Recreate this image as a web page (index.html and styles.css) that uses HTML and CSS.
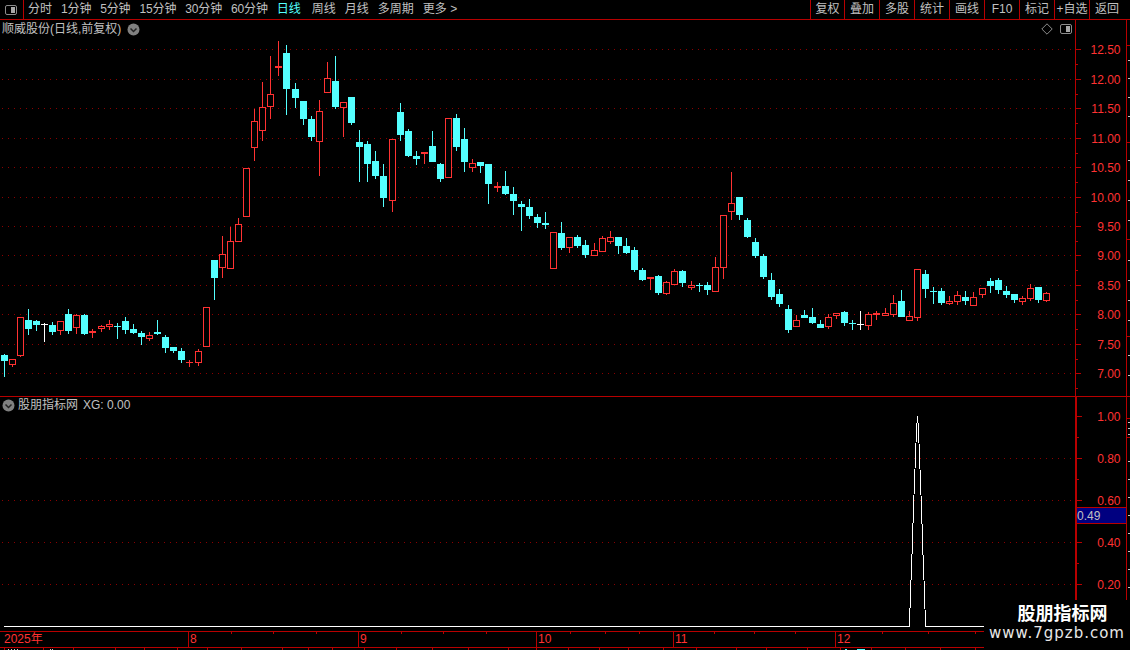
FILE: index.html
```html
<!DOCTYPE html>
<html lang="zh-CN">
<head>
<meta charset="utf-8">
<title>顺威股份</title>
<link rel="stylesheet" href="styles.css">
</head>
<body>
<div class="app">
  <header class="toolbar">
    <div class="tool-icon">
      <svg class="panel-icon" width="12" height="10" viewBox="0 0 12 10"><rect x="0.5" y="0.5" width="11" height="9" rx="1.5" class="panel-frame"/><rect x="6" y="2" width="4" height="6" class="panel-fill"/></svg>
    </div>
    <nav class="periods">
      <span>分时</span><span class="num">1分钟</span><span class="num">5分钟</span><span class="num">15分钟</span><span class="num">30分钟</span><span class="num">60分钟</span><span class="active">日线</span><span>周线</span><span>月线</span><span>多周期</span><span>更多 &gt;</span>
    </nav>
    <div class="actions">
      <span>复权</span><span>叠加</span><span>多股</span><span>统计</span><span>画线</span><span>F10</span><span>标记</span><span>+自选</span><span class="last">返回</span>
    </div>
  </header>

  <section class="pane pane-main">
    <div class="plot">
      <svg id="kline" class="chart" width="1075" height="376" viewBox="0 20 1075 376"></svg>
      <div class="pane-title title-main">
        <span>顺威股份(日线,前复权)</span>
        <svg class="fold" width="13" height="13" viewBox="0 0 13 13"><circle cx="6.5" cy="6.5" r="6" class="fold-disc"/><path d="M3.5 5.5 6.5 8.5 9.5 5.5" class="fold-mark"/></svg>
      </div>
      <div class="pane-tools">
        <svg width="12" height="12" viewBox="0 0 12 12"><path d="M6 0.8 11.2 6 6 11.2 0.8 6Z" class="panel-frame"/></svg>
        <svg width="12" height="10" viewBox="0 0 12 10"><rect x="0.5" y="0.5" width="11" height="9" rx="1.5" class="panel-frame"/><rect x="6" y="2" width="4" height="6" class="panel-fill"/></svg>
      </div>
    </div>
    <svg id="axis-main" class="axis" width="50" height="376" viewBox="1076 20 50 376"></svg>
    <svg id="strip-main" class="strip" width="3" height="376" viewBox="1127 20 3 376"></svg>
  </section>

  <section class="pane pane-sub">
    <div class="plot">
      <svg id="spike" class="chart" width="1075" height="233" viewBox="0 397 1075 233"></svg>
      <div class="pane-title title-sub">
        <svg class="fold" width="13" height="13" viewBox="0 0 13 13"><circle cx="6.5" cy="6.5" r="6" class="fold-disc"/><path d="M3.5 5.5 6.5 8.5 9.5 5.5" class="fold-mark"/></svg>
        <span>股朋指标网</span><span class="xg">XG: 0.00</span>
      </div>
    </div>
    <svg id="axis-sub" class="axis axis-thick" width="49" height="233" viewBox="1077 397 49 233"></svg>
    <svg id="strip-sub" class="strip" width="3" height="233" viewBox="1127 397 3 233"></svg>
  </section>

  <section class="dates">
    <svg id="dates" class="chart" width="1130" height="15" viewBox="0 631 1130 15"></svg>
  </section>
  <svg id="foot" class="foot" width="1130" height="3" viewBox="0 647 1130 3"></svg>

  <aside class="watermark">
    <div class="wm-title">股朋指标网</div>
    <div class="wm-url">www.7gpzb.com</div>
  </aside>
</div>
<script src="chart.js"></script>
</body>
</html>
```

FILE: styles.css
```css
* { box-sizing: border-box; }
html, body { margin: 0; padding: 0; background: #000; }
body { font-family: "Liberation Sans", "Noto Sans CJK SC", sans-serif; font-size: 12px; color: #c0c0c0; }

.app { position: relative; width: 1130px; height: 650px; overflow: hidden; background: #000; display: flex; flex-direction: column; }

.toolbar { display: flex; align-items: stretch; height: 20px; border-bottom: 1px solid #b80000; line-height: 19px; flex: none; }
.tool-icon { width: 24px; border-right: 1px solid #b80000; display: flex; align-items: center; padding-left: 5px; }
.periods { display: flex; gap: 9px; padding-left: 4px; white-space: nowrap; }
.periods .num { letter-spacing: -0.15px; }
.periods .active { color: #54ffff; margin-right: 2px; }
.actions { margin-left: auto; display: flex; }
.actions span { width: 35px; border-left: 1px solid #b80000; text-align: center; white-space: nowrap; }
.actions span:first-child { width: 34px; }
.actions .last { width: 41px; padding-right: 6px; }

.panel-frame { fill: none; stroke: #8c8c8c; stroke-width: 1; }
.panel-fill { fill: #a8a8a8; }
.fold-disc { fill: #808080; }
.fold-mark { fill: none; stroke: #222; stroke-width: 1.5; }

.pane { display: flex; flex: none; border-bottom: 1px solid #b80000; }
.pane-main { height: 377px; }
.pane-sub { height: 234px; border-bottom: 0; }
.plot { position: relative; width: 1075px; flex: none; }
.chart { display: block; }
.axis { display: block; flex: none; box-sizing: content-box; border-right: 1px solid #b80000; box-shadow: -1px 0 0 #b80000; margin-left: 1px; }
.axis-thick { margin-left: 2px; box-shadow: -2px 0 0 #b80000; }
.strip { display: block; flex: none; }

.pane-title { position: absolute; display: flex; align-items: center; white-space: nowrap; line-height: 14px; }
.title-main { left: 2px; top: 2px; gap: 6px; }
.title-sub { left: 2px; top: 1px; gap: 3px; }
.title-sub .xg { margin-left: 2px; }
.fold { display: block; flex: none; }
.pane-tools { position: absolute; right: 3px; top: 3px; display: flex; align-items: center; gap: 7px; }

.dates { height: 17px; flex: none; border-top: 1px solid #b80000; border-bottom: 1px solid #b80000; }
.foot { display: block; flex: none; }

.grid { stroke: #8c0000; stroke-width: 1; stroke-dasharray: 1 5; }
.tick { fill: #b80000; }
.label { fill: #ff3232; font-size: 12px; font-family: "Liberation Sans", "Noto Sans CJK SC", sans-serif; }
.label-value { fill: #c0c0c0; }
.value-box { fill: #000080; stroke: #b80000; stroke-width: 1; }
.mark { fill: #c8c8c8; }
.up { fill: #000; stroke: #ff3232; stroke-width: 1; }
.up-wick, .up-solid { fill: #ff3232; }
.down { fill: #54ffff; }
.flat { fill: #fff; }
.spike-line { fill: none; stroke: #fff; stroke-width: 1; shape-rendering: crispEdges; }
.baseline { fill: #fff; }
.chart rect, .axis rect, .strip rect, .foot rect { shape-rendering: crispEdges; }

.watermark { position: absolute; right: 0; bottom: 0; width: 146px; height: 50px; background: #000; color: #fff; text-align: center; font-weight: 700; }
.wm-title { font-family: "Noto Sans CJK SC", sans-serif; font-size: 18px; line-height: 24px; padding-left: 11px; }
.wm-url { font-family: "DejaVu Sans", sans-serif; font-weight: 400; font-size: 15px; line-height: 18px; letter-spacing: 1px; color: #e8e8e8; }
```

FILE: chart.js
```js
var NS = "http://www.w3.org/2000/svg";

function add(svg, tag, attrs, text) {
  var el = document.createElementNS(NS, tag);
  for (var k in attrs) el.setAttribute(k, attrs[k]);
  if (text !== undefined) el.textContent = text;
  svg.appendChild(el);
  return el;
}

function box(svg, x, y, w, h, cls) {
  add(svg, "rect", { x: x, y: y, width: w, height: h, "class": cls });
}

/* high, body top, body bottom, low (pixels), kind:
   c falling, r rising hollow, R rising flat, w unchanged */
var candles = [
[354,355,361,377,"c"],[359,359,365,367,"r"],[317,317,356,357,"r"],[309,320,329,335,"c"],[320,321,325,331,"c"],
[323,324,325,342,"w"],[322,325,332,335,"c"],[321,321,331,335,"r"],[309,314,331,334,"c"],[314,315,328,334,"r"],
[314,315,334,335,"c"],[329,331,333,338,"R"],[325,326,329,332,"r"],[320,324,327,330,"r"],[323,326,327,339,"c"],
[317,321,330,334,"c"],[324,329,333,334,"c"],[331,333,337,345,"c"],[332,335,339,341,"r"],[320,332,334,335,"c"],
[335,337,348,353,"c"],[347,347,351,353,"c"],[348,351,360,363,"c"],[360,362,363,367,"R"],[349,351,363,366,"r"],
[307,307,347,347,"r"],[260,260,278,300,"c"],[236,254,268,278,"r"],[227,241,269,269,"r"],[218,224,242,242,"r"],
[168,168,217,217,"r"],[109,121,148,161,"r"],[82,107,131,141,"r"],[56,94,107,119,"r"],[41,66,68,76,"R"],
[45,53,89,115,"c"],[83,89,98,108,"c"],[101,101,119,125,"c"],[116,119,137,141,"c"],[100,111,142,176,"r"],
[62,78,93,93,"r"],[56,81,107,109,"c"],[102,102,108,137,"r"],[97,97,123,125,"c"],[130,142,147,182,"c"],
[141,144,164,182,"c"],[151,161,176,179,"c"],[164,176,198,207,"c"],[139,139,201,212,"r"],[103,112,135,141,"c"],
[129,131,156,157,"c"],[151,156,159,165,"c"],[152,152,154,164,"R"],[131,146,162,162,"c"],[163,164,179,182,"c"],
[118,118,178,178,"r"],[114,118,147,151,"c"],[128,139,162,172,"c"],[159,163,168,172,"r"],[162,162,166,173,"c"],
[164,164,184,204,"c"],[182,186,188,192,"R"],[171,186,194,195,"c"],[187,194,201,215,"c"],[201,204,207,231,"c"],
[199,207,216,219,"c"],[214,217,223,228,"c"],[212,223,225,229,"c"],[232,232,269,269,"r"],[222,233,248,250,"c"],
[237,237,248,253,"r"],[235,237,246,248,"c"],[240,245,255,258,"c"],[243,250,256,256,"r"],[236,238,252,252,"r"],
[231,237,242,244,"r"],[237,237,246,254,"c"],[238,246,253,254,"c"],[247,250,270,272,"c"],[268,270,280,281,"c"],
[277,277,279,290,"r"],[275,276,293,295,"c"],[281,282,294,295,"r"],[269,271,285,285,"r"],[270,271,283,287,"c"],
[281,285,288,290,"r"],[283,285,286,292,"c"],[282,285,290,295,"c"],[257,267,292,292,"r"],[215,215,268,279,"r"],
[172,203,212,220,"r"],[197,197,215,220,"c"],[218,220,237,238,"c"],[238,242,256,258,"c"],[254,256,277,279,"c"],
[273,280,297,300,"c"],[289,294,304,307,"c"],[305,309,330,333,"c"],[315,320,327,327,"r"],[310,315,318,318,"c"],
[308,317,323,324,"c"],[320,324,328,328,"c"],[314,317,327,329,"r"],[313,313,316,319,"r"],[311,312,323,326,"c"],
[320,323,324,330,"c"],[311,324,325,330,"w"],[312,314,326,330,"r"],[311,313,315,320,"R"],[308,313,316,316,"r"],
[295,303,315,317,"r"],[290,301,317,317,"c"],[311,316,321,321,"r"],[269,269,318,321,"r"],[270,274,289,298,"c"],
[287,291,292,304,"c"],[288,291,303,305,"c"],[296,301,304,305,"r"],[291,295,302,305,"r"],[291,297,301,305,"c"],
[292,297,306,306,"r"],[288,288,295,298,"r"],[278,281,286,293,"c"],[278,280,290,294,"c"],[286,291,295,298,"c"],
[294,294,300,303,"c"],[296,298,302,305,"r"],[284,288,299,301,"r"],[287,287,300,303,"c"],[292,293,301,302,"r"]
];

var skips = [12, 24, 36, 48, 61, 73, 85, 97, 109, 121];

function candleX(i) {
  var extra = 0;
  skips.forEach(function (s) { if (i >= s) extra++; });
  return 4 + 8 * i + extra;
}

function drawGrid(svg, ys, width) {
  ys.forEach(function (y) {
    add(svg, "line", { x1: 2, y1: y + 0.5, x2: width, y2: y + 0.5, "class": "grid" });
  });
}

function drawCandles(svg) {
  candles.forEach(function (c, i) {
    var x = candleX(i), hi = c[0], top = c[1], bot = c[2], lo = c[3], kind = c[4];
    if (kind === "c") {
      box(svg, x, hi, 1, lo - hi, "down");
      box(svg, x - 3, top, 7, bot - top, "down");
    } else if (kind === "w") {
      box(svg, x, hi, 1, lo - hi, "flat");
      box(svg, x - 3, top, 7, 1, "flat");
    } else if (kind === "R") {
      box(svg, x, hi, 1, lo - hi, "up-wick");
      box(svg, x - 3, top, 7, bot - top, "up-solid");
    } else {
      box(svg, x, hi, 1, lo - hi, "up-wick");
      add(svg, "rect", { x: x - 2.5, y: top + 0.5, width: 6, height: bot - top - 1, "class": "up" });
    }
  });
}

function drawAxis(svg, labels, x0) {
  labels.forEach(function (l) {
    box(svg, x0, l[0], 5, 1, "tick");
    add(svg, "text", { x: 1120.5, y: l[0] + 5, "text-anchor": "end", "class": "label" }, l[1]);
  });
}

function drawMinor(svg, ys, x0) {
  ys.forEach(function (y) { box(svg, x0, y, 2, 1, "tick"); });
}

/* price pane */
var priceY = [49, 79, 108, 138, 167, 197, 226, 255, 285, 314, 344, 373];
var prices = ["12.50", "12.00", "11.50", "11.00", "10.50", "10.00", "9.50", "9.00", "8.50", "8.00", "7.50", "7.00"];
var kline = document.getElementById("kline");
drawGrid(kline, priceY, 1075);
drawCandles(kline);

var axisMain = document.getElementById("axis-main");
drawAxis(axisMain, priceY.map(function (y, i) { return [y, prices[i]]; }), 1076);
drawMinor(axisMain, priceY.map(function (y) { return y + 15; }), 1076);

/* indicator pane */
var subY = [458, 500, 542, 584];
var spike = document.getElementById("spike");
drawGrid(spike, subY, 1075);
box(spike, 4, 626, 906, 1, "baseline");
box(spike, 925, 626, 150, 1, "baseline");
add(spike, "polyline", {
  points: "909.5,627 910.5,590 911.5,570 913.5,508 914.5,482 915.5,456 916.5,430 917.5,416 918.5,430 919.5,456 920.5,482 921.5,508 923.5,570 924.5,590 925.5,627",
  "class": "spike-line"
});

var axisSub = document.getElementById("axis-sub");
drawAxis(axisSub, [[416, "1.00"], [458, "0.80"], [500, "0.60"], [542, "0.40"], [584, "0.20"]], 1077);
drawMinor(axisSub, [437, 479, 521, 563, 605], 1077);
add(axisSub, "rect", { x: 1076.5, y: 507.5, width: 50, height: 16, "class": "value-box" });
add(axisSub, "text", { x: 1077, y: 520, "class": "label label-value" }, "0.49");

/* neighbouring pane's scale, cut off by the window edge */
var stripMain = document.getElementById("strip-main");
[45, 142, 239, 336].forEach(function (y) { box(stripMain, 1127, y, 3, 1, "tick"); });
[60, 78, 97, 116, 160, 180, 200, 220, 260, 280, 300, 320, 355, 375].forEach(function (y) { box(stripMain, 1128, y, 2, 1, "mark"); });
var stripSub = document.getElementById("strip-sub");
[418, 437].forEach(function (y) { box(stripSub, 1127, y, 3, 1, "tick"); });
[422, 428, 434, 461, 479, 497, 515, 533, 551, 569, 587].forEach(function (y) { box(stripSub, 1128, y, 2, 1, "mark"); });

/* date scale */
var dates = document.getElementById("dates");
[[188, "8"], [358, "9"], [536, "10"], [673, "11"], [835, "12"]].forEach(function (d) {
  box(dates, d[0], 631, 1, 15, "tick");
  add(dates, "text", { x: d[0] + 2, y: 642, "class": "label" }, d[1]);
});
add(dates, "text", { x: 4, y: 642, "class": "label" }, "2025年");
[231, 273, 316, 401, 443, 486, 570, 605, 639, 714, 754, 795, 882, 928, 975].forEach(function (x) {
  box(dates, x, 631, 1, 2, "tick");
});

var foot = document.getElementById("foot");
[4, 43, 73, 115, 144, 177, 207, 241, 282, 308, 332, 364, 396, 432, 468, 508, 536, 568, 599, 628, 663, 696, 736, 766, 807, 840, 871, 905, 940, 975].forEach(function (x) {
  box(foot, x, 647, 1, 3, "tick");
});
[8, 11, 14, 17, 50, 52].forEach(function (x) { box(foot, x, 648, 1, 2, "mark"); });
box(foot, 845, 648, 2, 2, "down");
box(foot, 857, 648, 8, 2, "down");
```
